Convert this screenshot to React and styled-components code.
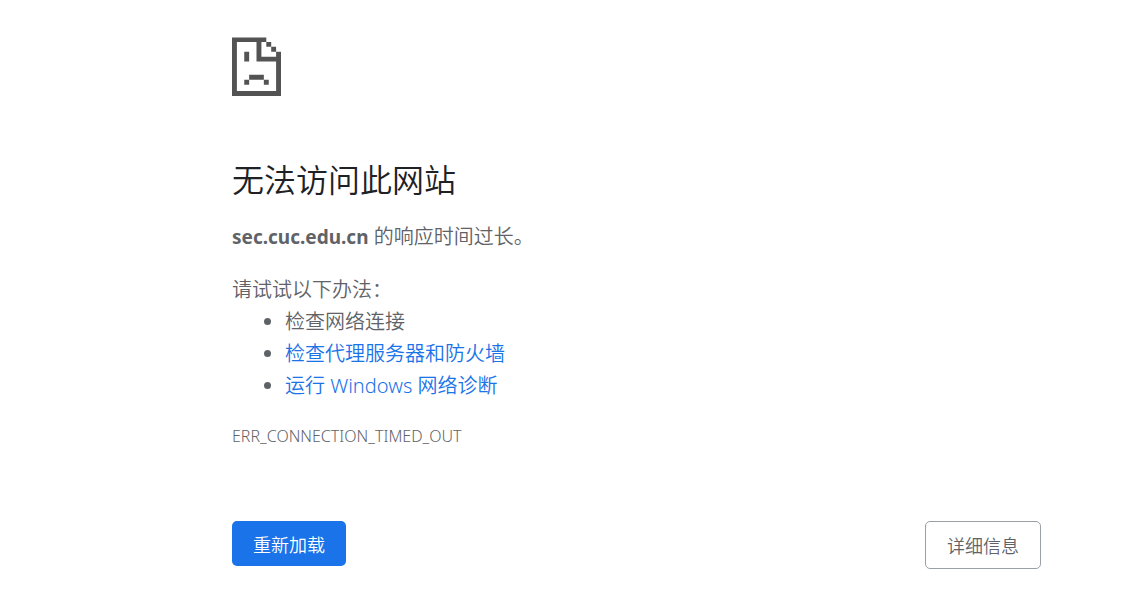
import React from "react";
import styled, { createGlobalStyle } from "styled-components";

const GlobalStyle = createGlobalStyle`
  body {
    margin: 0;
    background: #fff;
    color: #5f6368;
    font-family: "Noto Sans", "Noto Sans CJK SC", sans-serif;
    font-size: 20px;
    font-weight: 350;
    line-height: 32px;
  }
`;

const Page = styled.main`
  box-sizing: border-box;
  max-width: 809px;
  margin: 0 99px 0 auto;
  padding: 37px 0 40px;
`;

const FileIcon = styled.svg`
  display: block;
  width: 49px;
  height: 59px;
  margin-bottom: 60px;
`;

const Title = styled.h1`
  margin: 0 0 17px;
  color: #202124;
  font-size: 32px;
  font-weight: 350;
  line-height: 48px;
`;

const Summary = styled.p`
  margin: 0 0 21px;

  strong {
    font-size: 19px;
    font-weight: 700;
  }
`;

const Suggestions = styled.section`
  p {
    margin: 0;
  }

  ul {
    margin: 0;
    padding-left: 53px;
  }
`;

const Link = styled.a`
  color: #1a73e8;
  text-decoration: none;
`;

const ErrorCode = styled.p`
  margin: 18px 0 0;
  font-size: 16px;
`;

const Actions = styled.div`
  display: flex;
  justify-content: space-between;
  align-items: flex-start;
  margin-top: 69px;
`;

const Button = styled.button`
  box-sizing: border-box;
  height: ${(p) => (p.$primary ? 45 : 48)}px;
  padding: 0 21px;
  border: ${(p) => (p.$primary ? "0" : "1px solid #9aa0a6")};
  border-radius: 5px;
  background: ${(p) => (p.$primary ? "#1a73e8" : "#fff")};
  color: ${(p) => (p.$primary ? "#fff" : "#5f6368")};
  font-family: inherit;
  font-size: 18px;
  font-weight: inherit;
  cursor: pointer;
`;

export default function App() {
  return (
    <>
      <GlobalStyle />
      <Page>
        <FileIcon viewBox="0 0 10 12" preserveAspectRatio="none" fill="#535353" aria-hidden="true">
          <path fillRule="evenodd" d="M0 0.1H7V1H8V2H9V3H10V12H0ZM1 1V11H9V5H5V1ZM6 1V4H9V3H8V2H7V1Z" />
          <path d="M2.5 3h1v2h-1zM3.5 7.7h3v1h-3zM2.5 8.7h1v1h-1zM6.5 8.7h1v1h-1z" />
        </FileIcon>
        <Title>无法访问此网站</Title>
        <Summary><strong>sec.cuc.edu.cn</strong> 的响应时间过长。</Summary>
        <Suggestions>
          <p>请试试以下办法：</p>
          <ul>
            <li>检查网络连接</li>
            <li><Link href="#proxy">检查代理服务器和防火墙</Link></li>
            <li><Link href="#diagnose">运行 Windows 网络诊断</Link></li>
          </ul>
        </Suggestions>
        <ErrorCode>ERR_CONNECTION_TIMED_OUT</ErrorCode>
        <Actions>
          <Button type="button" $primary>重新加载</Button>
          <Button type="button">详细信息</Button>
        </Actions>
      </Page>
    </>
  );
}
